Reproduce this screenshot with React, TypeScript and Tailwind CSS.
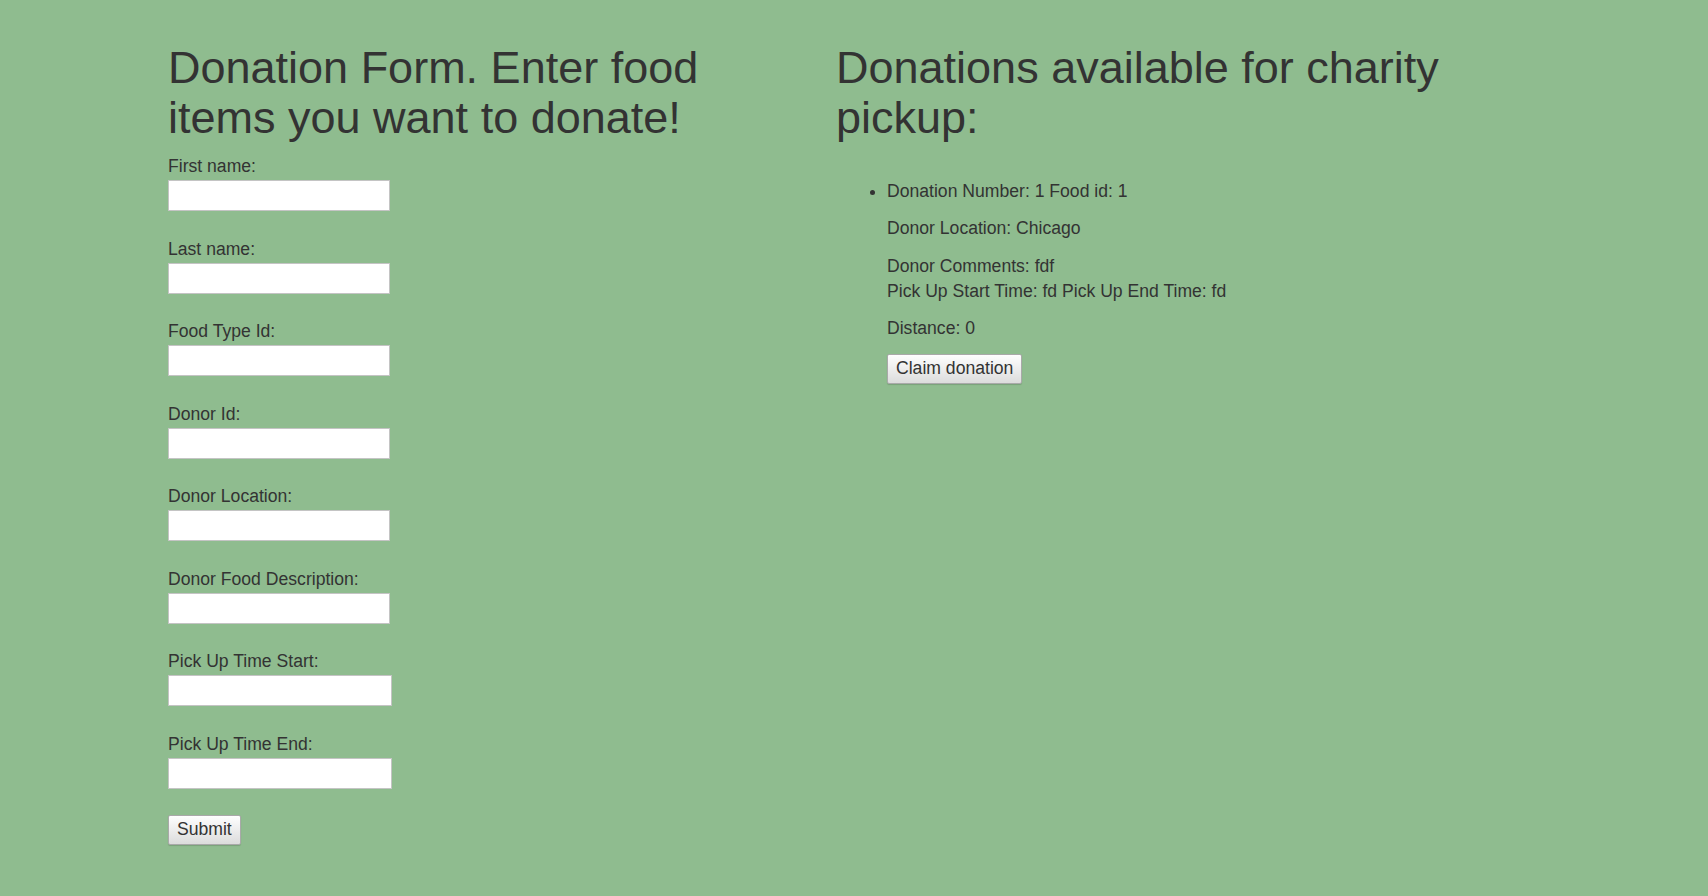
const fields = [
  { label: "First name:", wide: false },
  { label: "Last name:", wide: false },
  { label: "Food Type Id:", wide: false },
  { label: "Donor Id:", wide: false },
  { label: "Donor Location:", wide: false },
  { label: "Donor Food Description:", wide: false },
  { label: "Pick Up Time Start:", wide: true },
  { label: "Pick Up Time End:", wide: true },
];

const btn =
  "h-[30px] px-[8px] border border-[#a9a9a9] rounded-[2px] bg-gradient-to-b from-[#fefefe] to-[#dcdcdc] text-[17.6px] leading-none text-[#333] shadow-[0_1px_1px_rgba(0,0,0,0.15)]";

export default function App() {
  return (
    <div
      className="min-h-screen bg-[#8fbc8f] text-[#333] text-[17.6px] leading-[25px]"
      style={{ fontFamily: '"Liberation Sans", Arial, sans-serif' }}
    >
      <div className="flex pl-[168px] pt-[43px]">
        {/* donation form */}
        <div className="w-[668px] shrink-0">
          <h1 className="w-[620px] text-[45px] leading-[50px] font-normal mb-[11px]">
            Donation Form. Enter food items you want to donate!
          </h1>
          <form className="flex flex-col" onSubmit={(e) => e.preventDefault()}>
            {fields.map((f) => (
              <div key={f.label} className="flex flex-col mb-[25.5px]">
                <label className="h-[25px]">{f.label}</label>
                <input
                  type="text"
                  className={`mt-[1px] h-[31px] ${f.wide ? "w-[224px]" : "w-[222px]"} bg-white border border-[#c4c4c4] px-1 outline-none`}
                />
              </div>
            ))}
            <div className="mt-[1px]">
              <button type="submit" className={btn}>
                Submit
              </button>
            </div>
          </form>
        </div>

        {/* donations list */}
        <div className="w-[640px]">
          <h1 className="w-[620px] text-[45px] leading-[50px] font-normal">
            Donations available for charity pickup:
          </h1>
          <ul className="mt-[36px] pl-[51px] list-disc">
            <li>
              Donation Number: 1 Food id: 1
              <p className="mt-[12px]">Donor Location: Chicago</p>
              <p className="mt-[13px]">
                Donor Comments: fdf
                <br />
                Pick Up Start Time: fd Pick Up End Time: fd
              </p>
              <p className="mt-[12px]">Distance: 0</p>
              <button className={`${btn} mt-[13px]`}>Claim donation</button>
            </li>
          </ul>
        </div>
      </div>
    </div>
  );
}
